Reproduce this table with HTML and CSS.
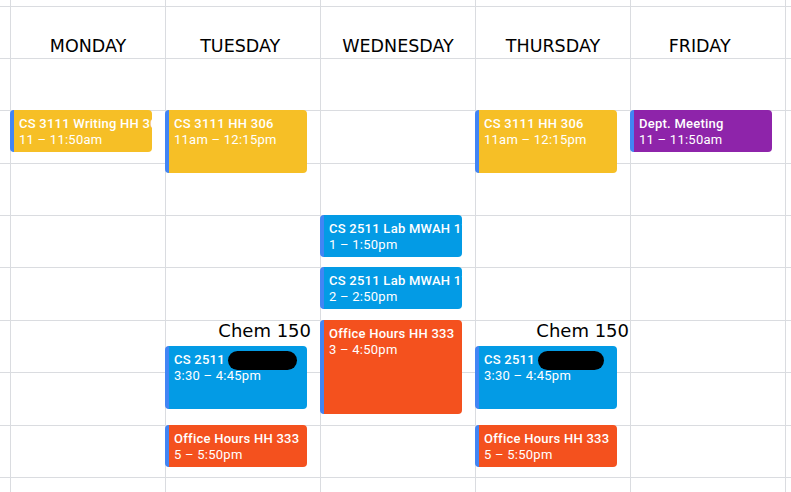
FILE: index.html
```html
<!DOCTYPE html>
<html>
<head>
    <title>Schedule</title>
    <link rel="stylesheet" href="styles.css">
</head>
<body>
    <div class="sheet">
        <!-- top strip -->
        <div></div><div></div><div></div><div></div><div></div><div></div><div></div>

        <!-- day names -->
        <div></div>
        <div class="day">MONDAY</div>
        <div class="day">TUESDAY </div>
        <div class="day">WEDNESDAY</div>
        <div class="day">THURSDAY</div>
        <div class="day">FRIDAY   </div>
        <div></div>

        <!-- 10am -->
        <div></div><div></div><div></div><div></div><div></div><div></div><div></div>

        <!-- 11am -->
        <div></div>
        <div class="busy">
            <div class="event banana">
                <div class="title">CS 3111 Writing HH 306</div>
                <div>11 – 11:50am</div>
            </div>
        </div>
        <div class="busy">
            <div class="event banana long">
                <div class="title">CS 3111 HH 306</div>
                <div>11am – 12:15pm</div>
            </div>
        </div>
        <div></div>
        <div class="busy">
            <div class="event banana long">
                <div class="title">CS 3111 HH 306</div>
                <div>11am – 12:15pm</div>
            </div>
        </div>
        <div class="busy">
            <div class="event grape">
                <div class="title">Dept. Meeting</div>
                <div>11 – 11:50am</div>
            </div>
        </div>
        <div></div>

        <!-- 12pm -->
        <div></div><div></div><div></div><div></div><div></div><div></div><div></div>

        <!-- 1pm -->
        <div></div><div></div><div></div>
        <div class="busy">
            <div class="event peacock">
                <div class="title">CS 2511 Lab MWAH 177</div>
                <div>1 – 1:50pm</div>
            </div>
        </div>
        <div></div><div></div><div></div>

        <!-- 2pm -->
        <div></div><div></div><div></div>
        <div class="busy">
            <div class="event peacock">
                <div class="title">CS 2511 Lab MWAH 177</div>
                <div>2 – 2:50pm</div>
            </div>
        </div>
        <div></div><div></div><div></div>

        <!-- 3pm -->
        <div></div>
        <div></div>
        <div class="busy">
            <div class="chem">Chem 150</div>
            <div class="event peacock long">
                <div class="title">CS 2511 <span class="redact"></span></div>
                <div>3:30 – 4:45pm</div>
            </div>
        </div>
        <div class="busy">
            <div class="event tangerine longer">
                <div class="title">Office Hours HH 333</div>
                <div>3 – 4:50pm</div>
            </div>
        </div>
        <div class="busy">
            <div class="chem flush">Chem 150</div>
            <div class="event peacock long">
                <div class="title">CS 2511 <span class="redact short"></span></div>
                <div>3:30 – 4:45pm</div>
            </div>
        </div>
        <div></div>
        <div></div>

        <!-- 4pm -->
        <div></div><div></div><div></div><div></div><div></div><div></div><div></div>

        <!-- 5pm -->
        <div></div>
        <div></div>
        <div class="busy">
            <div class="event tangerine">
                <div class="title">Office Hours HH 333</div>
                <div>5 – 5:50pm</div>
            </div>
        </div>
        <div></div>
        <div class="busy">
            <div class="event tangerine">
                <div class="title">Office Hours HH 333</div>
                <div>5 – 5:50pm</div>
            </div>
        </div>
        <div></div>
        <div></div>

        <!-- 6pm -->
        <div></div><div></div><div></div><div></div><div></div><div></div><div></div>
    </div>
</body>
</html>
```

FILE: styles.css
```css
body {
    margin: 0;
    font-family: "DejaVu Sans", sans-serif;
    color: #000;
    background: #fff;
}
.sheet {
    display: grid;
    grid-template-columns: 10px repeat(5, 154px) 1fr;
    grid-template-rows: 6px 51px 51px 52px 51px 51px 52px 51px 52px 51px 1fr;
    gap: 1px;
    height: 100vh;
    background: #dadce0;
    overflow: hidden;
}
.sheet > div {
    background: #fff;
    min-width: 0;
}
.day {
    display: flex;
    align-items: flex-end;
    justify-content: center;
    padding-bottom: 2px;
    font-size: 17.5px;
    white-space: pre;
}
.busy {
    z-index: 1;
}
.chem {
    height: 25px;
    padding-right: 9px;
    font-size: 18px;
    line-height: 20px;
    text-align: right;
}
.chem.flush {
    padding-right: 1px;
}
.event {
    box-sizing: border-box;
    width: 142px;
    height: 42px;
    margin: -1px 0 0 -1px;
    padding: 6px 0 0 5px;
    border-left: 4px solid #4285f4;
    border-radius: 4px;
    overflow: hidden;
    white-space: nowrap;
    font-family: Roboto, sans-serif;
    font-size: 13px;
    line-height: 16px;
    letter-spacing: .25px;
    color: #fff;
}
.chem + .event {
    margin-top: 0;
}
.event .title {
    font-weight: 500;
}
.event.long {
    height: 63px;
}
.event.longer {
    height: 94px;
}
.banana {
    background: #f6bf26;
}
.peacock {
    background: #039be5;
}
.tangerine {
    background: #f4511e;
}
.grape {
    background: #8e24aa;
}
.redact {
    display: inline-block;
    width: 69px;
    height: 19px;
    margin: -3px 0;
    background: #000;
    border-radius: 10px;
    vertical-align: middle;
}
.redact.short {
    width: 66px;
}
```
